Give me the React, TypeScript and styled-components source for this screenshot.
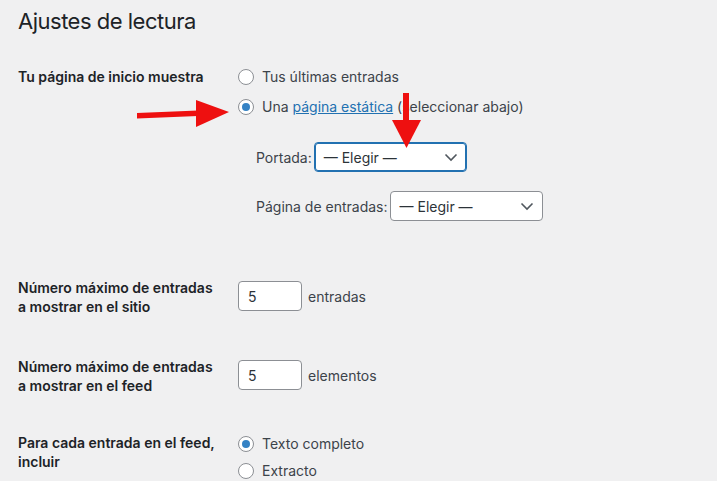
import React from "react";
import styled, { createGlobalStyle, css } from "styled-components";

const Global = createGlobalStyle`
  html, body { margin: 0; padding: 0; background: #f0f0f1; }
  body {
    font-family: Inter, "Noto Sans", "Liberation Sans", sans-serif;
    font-size: 14px;
    color: #3c434a;
    overflow: hidden;
  }
`;

const Page = styled.div`
  position: relative;
  width: 717px;
  height: 481px;
  padding: 0 18px;
  box-sizing: border-box;
`;

const Title = styled.h1`
  margin: 0;
  padding-top: 7px;
  font-size: 22px;
  letter-spacing: -0.5px;
  line-height: 29px;
  font-weight: 400;
  color: #1d2327;
`;

const Row = styled.div<{ $top: number }>`
  display: grid;
  grid-template-columns: 220px 1fr;
  align-items: start;
  margin-top: ${(p) => p.$top}px;
`;

const Label = styled.div<{ $pad?: number }>`
  font-weight: 600;
  color: #1d2327;
  line-height: 18.5px;
  padding-top: ${(p) => p.$pad ?? 0}px;
`;

const Field = styled.div<{ $pad?: number }>`
  display: flex;
  flex-direction: column;
  padding-top: ${(p) => p.$pad ?? 0}px;
`;

const RadioList = styled.div<{ $gap: number }>`
  display: flex;
  flex-direction: column;
  gap: ${(p) => p.$gap}px;
`;

const RadioLine = styled.label`
  display: flex;
  align-items: center;
  gap: 8px;
  line-height: 20px;
  height: 20px;
`;

const Radio = styled.span<{ $checked?: boolean }>`
  width: 16px;
  height: 16px;
  box-sizing: border-box;
  border-radius: 50%;
  border: 1px solid #8c8f94;
  background: #fff;
  display: inline-flex;
  align-items: center;
  justify-content: center;
  flex: none;
  ${(p) =>
    p.$checked &&
    css`
      &::after {
        content: "";
        width: 8px;
        height: 8px;
        border-radius: 50%;
        background: #3582c4;
      }
    `}
`;

const Link = styled.a`
  color: #2271b1;
  text-decoration: underline;
`;

const SubList = styled.div`
  display: flex;
  flex-direction: column;
  gap: 19px;
  margin-top: 25px;
  padding-left: 18px;
`;

const SubRow = styled.div`
  display: flex;
  align-items: center;
  gap: 2px;
`;

const Select = styled.div<{ $focus?: boolean }>`
  width: 153px;
  height: 30px;
  box-sizing: border-box;
  border: 1px solid ${(p) => (p.$focus ? "#2271b1" : "#8c8f94")};
  box-shadow: ${(p) => (p.$focus ? "inset 0 0 0 1px #2271b1" : "none")};
  border-radius: 4px;
  background: #fff;
  display: flex;
  align-items: center;
  justify-content: space-between;
  padding: 0 7px 0 9px;
  color: #2c3338;
  font-size: 14px;
`;

const Inline = styled.div`
  display: flex;
  align-items: center;
  gap: 6px;
`;

const NumberBox = styled.div`
  width: 64px;
  height: 30px;
  box-sizing: border-box;
  border: 1px solid #8c8f94;
  border-radius: 4px;
  background: #fff;
  display: flex;
  align-items: center;
  padding-left: 9px;
  color: #2c3338;
`;

const Overlay = styled.svg`
  position: absolute;
  left: 0;
  top: 0;
  pointer-events: none;
`;

const Chevron = () => (
  <svg width="16" height="16" viewBox="0 0 16 16">
    <path d="M2.5 5.5 L8 11 L13.5 5.5" fill="none" stroke="#50575e" strokeWidth="1.6" />
  </svg>
);

export default function App() {
  return (
    <>
      <Global />
      <Page>
        <Title>Ajustes de lectura</Title>

        <Row $top={31}>
          <Label $pad={1}>Tu página de inicio muestra</Label>
          <Field>
            <RadioList $gap={10}>
              <RadioLine>
                <Radio />
                Tus últimas entradas
              </RadioLine>
              <RadioLine>
                <Radio $checked />
                <span>
                  Una <Link href="#">página estática</Link> (seleccionar abajo)
                </span>
              </RadioLine>
            </RadioList>
            <SubList>
              <SubRow>
                Portada:
                <Select $focus>
                  — Elegir —
                  <Chevron />
                </Select>
              </SubRow>
              <SubRow>
                Página de entradas:
                <Select>
                  — Elegir —
                  <Chevron />
                </Select>
              </SubRow>
            </SubList>
          </Field>
        </Row>

        <Row $top={58}>
          <Label>
            Número máximo de entradas
            <br />a mostrar en el sitio
          </Label>
          <Field $pad={2}>
            <Inline>
              <NumberBox>5</NumberBox>
              entradas
            </Inline>
          </Field>
        </Row>

        <Row $top={42}>
          <Label>
            Número máximo de entradas
            <br />a mostrar en el feed
          </Label>
          <Field $pad={2}>
            <Inline>
              <NumberBox>5</NumberBox>
              elementos
            </Inline>
          </Field>
        </Row>

        <Row $top={39}>
          <Label>
            Para cada entrada en el feed,
            <br />
            incluir
          </Label>
          <Field>
            <RadioList $gap={7}>
              <RadioLine>
                <Radio $checked />
                Texto completo
              </RadioLine>
              <RadioLine>
                <Radio />
                Extracto
              </RadioLine>
            </RadioList>
          </Field>
        </Row>

        <Overlay width="717" height="481" viewBox="0 0 717 481">
          <polygon points="137,113 198,110.5 198,116 137,118.5" fill="#ee1010" />
          <polygon points="196,100 229,112 196,127" fill="#ee1010" />
          <polygon points="403,93 409,93 409,122 403,122" fill="#ee1010" />
          <polygon points="392,120 421,120 406.5,148" fill="#ee1010" />
        </Overlay>
      </Page>
    </>
  );
}
